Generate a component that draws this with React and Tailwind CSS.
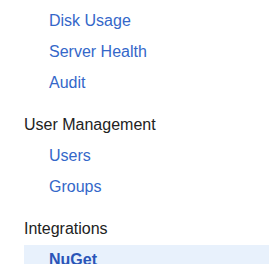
const sections = [
  { title: null, links: ["Disk Usage", "Server Health", "Audit"] },
  { title: "User Management", links: ["Users", "Groups"] },
  { title: "Integrations", links: ["NuGet"], active: "NuGet" },
]

const App = () => {
  return (
    <div className="bg-white w-[269px] h-[264px] overflow-hidden pt-[6px] pl-[24px] font-['Liberation_Sans',Arial,sans-serif] text-[16px]">
      {sections.map((s, i) => (
        <div key={i}>
          {s.title && (
            <h3 className="mt-[16px] mb-[6px] leading-5 text-[#222222] font-normal">
              {s.title}
            </h3>
          )}
          <ul>
            {s.links.map((l) => (
              <li key={l}>
                <a
                  href="#"
                  className={
                    l === s.active
                      ? "block pl-[25px] pt-[5px] pb-[6px] leading-5 bg-[#e8f1fc] text-[#2a55b8] font-bold"
                      : "block pl-[25px] pt-[5px] pb-[6px] leading-5 text-[#3467c9]"
                  }
                >
                  {l}
                </a>
              </li>
            ))}
          </ul>
        </div>
      ))}
    </div>
  )
}

export default App
